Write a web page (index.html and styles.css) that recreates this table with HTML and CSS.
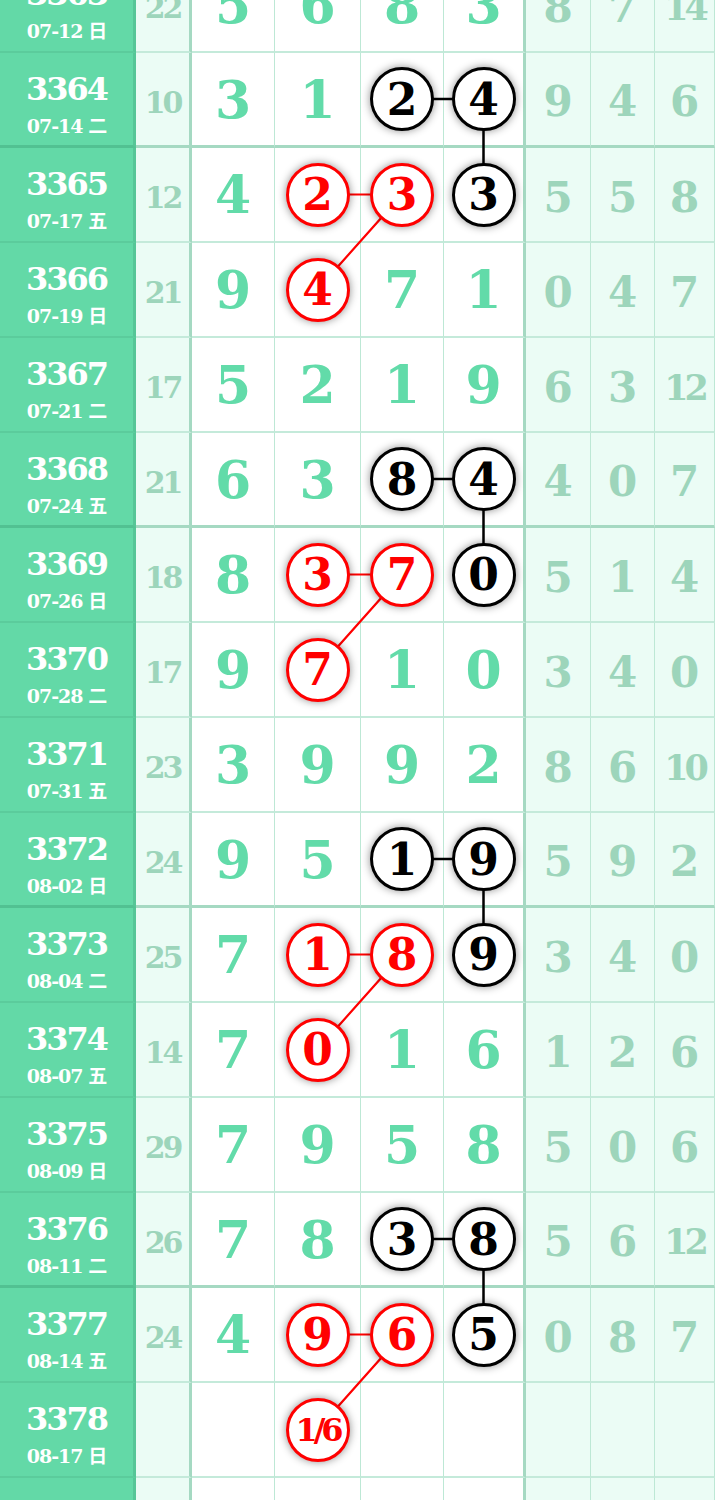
FILE: index.html
```html
<!DOCTYPE html>
<html lang="zh-CN">
<head>
    <meta charset="UTF-8">
    <meta name="viewport" content="width=device-width, initial-scale=1.0">
    <title>排列三 走势图</title>
    <link rel="stylesheet" href="styles.css">
</head>
<body>
    <div class="page">
        <div class="chart">
            <!-- 连线层 -->
            <svg class="links" width="715" height="1615" viewBox="0 0 715 1615">
                <g class="black">
                    <path d="M402 141H483.5V236.5"/>
                    <path d="M402 521H483.5V616.5"/>
                    <path d="M402 901H483.5V996.5"/>
                    <path d="M402 1281H483.5V1376.5"/>
                </g>
                <g class="red">
                    <path d="M317.5 236.5H402L317.5 331.5"/>
                    <path d="M317.5 616.5H402L317.5 711.5"/>
                    <path d="M317.5 996.5H402L317.5 1091.5"/>
                    <path d="M317.5 1376.5H402L317.5 1471.5"/>
                </g>
            </svg>

            <div class="row">
                <div class="issue"><b>3363</b><span>07-12 日</span></div>
                <div class="sum">22</div>
                <div class="d">5</div><div class="d">6</div><div class="d">8</div><div class="d last">3</div>
                <div class="x">8</div><div class="x">7</div><div class="x two">14</div>
            </div>
            <div class="row end">
                <div class="issue"><b>3364</b><span>07-14 二</span></div>
                <div class="sum">10</div>
                <div class="d">3</div><div class="d">1</div>
                <div class="d"><i class="ball">2</i></div><div class="d last"><i class="ball">4</i></div>
                <div class="x">9</div><div class="x">4</div><div class="x">6</div>
            </div>
            <div class="row">
                <div class="issue"><b>3365</b><span>07-17 五</span></div>
                <div class="sum">12</div>
                <div class="d">4</div>
                <div class="d"><i class="ball red">2</i></div><div class="d"><i class="ball red">3</i></div>
                <div class="d last"><i class="ball">3</i></div>
                <div class="x">5</div><div class="x">5</div><div class="x">8</div>
            </div>
            <div class="row">
                <div class="issue"><b>3366</b><span>07-19 日</span></div>
                <div class="sum">21</div>
                <div class="d">9</div><div class="d"><i class="ball red">4</i></div><div class="d">7</div><div class="d last">1</div>
                <div class="x">0</div><div class="x">4</div><div class="x">7</div>
            </div>
            <div class="row">
                <div class="issue"><b>3367</b><span>07-21 二</span></div>
                <div class="sum">17</div>
                <div class="d">5</div><div class="d">2</div><div class="d">1</div><div class="d last">9</div>
                <div class="x">6</div><div class="x">3</div><div class="x two">12</div>
            </div>
            <div class="row end">
                <div class="issue"><b>3368</b><span>07-24 五</span></div>
                <div class="sum">21</div>
                <div class="d">6</div><div class="d">3</div>
                <div class="d"><i class="ball">8</i></div><div class="d last"><i class="ball">4</i></div>
                <div class="x">4</div><div class="x">0</div><div class="x">7</div>
            </div>
            <div class="row">
                <div class="issue"><b>3369</b><span>07-26 日</span></div>
                <div class="sum">18</div>
                <div class="d">8</div>
                <div class="d"><i class="ball red">3</i></div><div class="d"><i class="ball red">7</i></div>
                <div class="d last"><i class="ball">0</i></div>
                <div class="x">5</div><div class="x">1</div><div class="x">4</div>
            </div>
            <div class="row">
                <div class="issue"><b>3370</b><span>07-28 二</span></div>
                <div class="sum">17</div>
                <div class="d">9</div><div class="d"><i class="ball red">7</i></div><div class="d">1</div><div class="d last">0</div>
                <div class="x">3</div><div class="x">4</div><div class="x">0</div>
            </div>
            <div class="row">
                <div class="issue"><b>3371</b><span>07-31 五</span></div>
                <div class="sum">23</div>
                <div class="d">3</div><div class="d">9</div><div class="d">9</div><div class="d last">2</div>
                <div class="x">8</div><div class="x">6</div><div class="x two">10</div>
            </div>
            <div class="row end">
                <div class="issue"><b>3372</b><span>08-02 日</span></div>
                <div class="sum">24</div>
                <div class="d">9</div><div class="d">5</div>
                <div class="d"><i class="ball">1</i></div><div class="d last"><i class="ball">9</i></div>
                <div class="x">5</div><div class="x">9</div><div class="x">2</div>
            </div>
            <div class="row">
                <div class="issue"><b>3373</b><span>08-04 二</span></div>
                <div class="sum">25</div>
                <div class="d">7</div>
                <div class="d"><i class="ball red">1</i></div><div class="d"><i class="ball red">8</i></div>
                <div class="d last"><i class="ball">9</i></div>
                <div class="x">3</div><div class="x">4</div><div class="x">0</div>
            </div>
            <div class="row">
                <div class="issue"><b>3374</b><span>08-07 五</span></div>
                <div class="sum">14</div>
                <div class="d">7</div><div class="d"><i class="ball red">0</i></div><div class="d">1</div><div class="d last">6</div>
                <div class="x">1</div><div class="x">2</div><div class="x">6</div>
            </div>
            <div class="row">
                <div class="issue"><b>3375</b><span>08-09 日</span></div>
                <div class="sum">29</div>
                <div class="d">7</div><div class="d">9</div><div class="d">5</div><div class="d last">8</div>
                <div class="x">5</div><div class="x">0</div><div class="x">6</div>
            </div>
            <div class="row end">
                <div class="issue"><b>3376</b><span>08-11 二</span></div>
                <div class="sum">26</div>
                <div class="d">7</div><div class="d">8</div>
                <div class="d"><i class="ball">3</i></div><div class="d last"><i class="ball">8</i></div>
                <div class="x">5</div><div class="x">6</div><div class="x two">12</div>
            </div>
            <div class="row">
                <div class="issue"><b>3377</b><span>08-14 五</span></div>
                <div class="sum">24</div>
                <div class="d">4</div>
                <div class="d"><i class="ball red">9</i></div><div class="d"><i class="ball red">6</i></div>
                <div class="d last"><i class="ball">5</i></div>
                <div class="x">0</div><div class="x">8</div><div class="x">7</div>
            </div>
            <div class="row">
                <div class="issue"><b>3378</b><span>08-17 日</span></div>
                <div class="sum"></div>
                <div class="d"></div><div class="d"><i class="ball red small">1/6</i></div><div class="d"></div><div class="d last"></div>
                <div class="x"></div><div class="x"></div><div class="x"></div>
            </div>
            <div class="row">
                <div class="issue"><b>3379</b><span>08-19 二</span></div>
                <div class="sum"></div>
                <div class="d"></div><div class="d"></div><div class="d"></div><div class="d last"></div>
                <div class="x"></div><div class="x"></div><div class="x"></div>
            </div>
        </div>
    </div>
</body>
</html>
```

FILE: styles.css
```css
body {
    margin: 0;
    background: #fff;
    font-family: "DejaVu Serif", "Noto Sans CJK SC", serif;
}

.page {
    width: 715px;
    height: 1500px;
    overflow: hidden;
}

.chart {
    position: relative;
    margin-top: -42px;
}

.links {
    position: absolute;
    top: 0;
    left: 0;
    z-index: 1;
    pointer-events: none;
}

.links path {
    fill: none;
    stroke-width: 2.5;
}

.links .black path {
    stroke: #000;
}

.links .red path {
    stroke: #f00;
    stroke-width: 2.2;
}

.row {
    display: grid;
    grid-template-columns: 136px 56px 83px 86px 83px 82px 65px 64px 60px;
    height: 95px;
}

.row > div {
    box-sizing: border-box;
    display: flex;
    align-items: center;
    justify-content: center;
    border-bottom: 2px solid #c4eada;
    border-right: 1px solid #bde8d5;
    font-weight: bold;
}

.row.end > div {
    border-bottom: 3px solid #a5d9c2;
}

.row > .issue {
    flex-direction: column;
    padding-top: 10px;
    background: #63d9a7;
    color: #fff;
    border-right: 3px solid #56c697;
    border-bottom-color: #5bcc9c;
}

.row.end > .issue {
    border-bottom-color: #52c192;
}

.issue b {
    font-size: 32px;
    line-height: 32px;
    letter-spacing: -2px;
}

.issue span {
    margin-top: 11px;
    font-size: 19px;
    line-height: 20px;
    letter-spacing: -1px;
}

.row > .sum {
    padding-top: 6px;
    background: #ebfcf5;
    color: #9dd5bb;
    font-size: 30px;
    letter-spacing: -3px;
    border-right: 3px solid #a5d9c2;
}

.d {
    color: #62dba9;
    font-size: 52px;
}

.row > .d.last {
    border-right: 3px solid #a5d9c2;
}

.row > .x {
    padding-top: 5px;
    background: #ebfcf5;
    color: #9dd5bb;
    font-size: 42px;
}

.row > .x.two {
    font-size: 35px;
    letter-spacing: -4px;
}

.ball {
    position: relative;
    z-index: 2;
    box-sizing: border-box;
    width: 64px;
    height: 64px;
    border: 3px solid #000;
    border-radius: 50%;
    background: #fff;
    display: flex;
    align-items: center;
    justify-content: center;
    font-style: normal;
    font-size: 44px;
    color: #000;
    box-shadow: 0 0 8px rgba(0, 0, 0, 0.45);
}

.ball.red {
    border-color: #f00;
    color: #f00;
}

.ball.small {
    font-size: 32px;
    letter-spacing: -4px;
}
```
